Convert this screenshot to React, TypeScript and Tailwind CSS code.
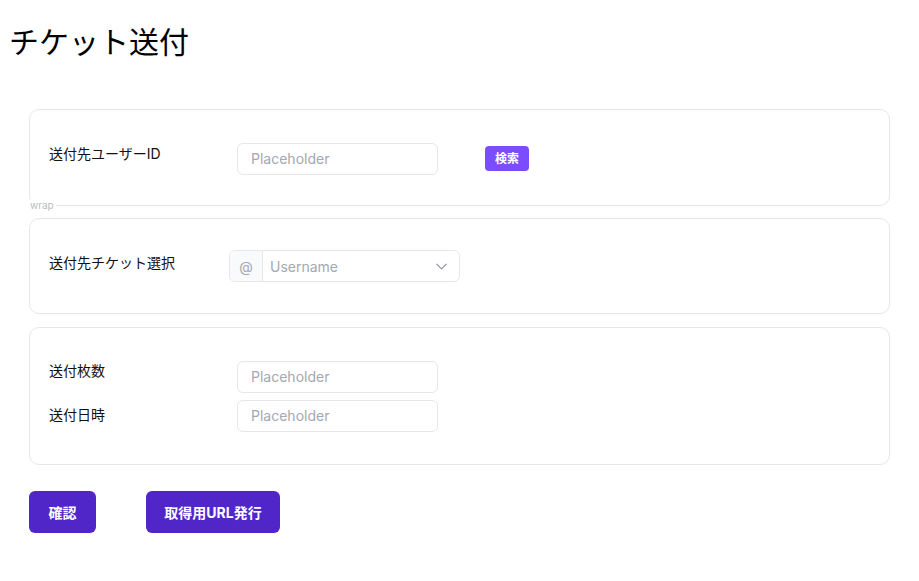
import { ChevronDown } from "lucide-react";

const font = "font-['Inter','Noto_Sans_CJK_JP',sans-serif]";

function TextInput() {
  return (
    <input
      placeholder="Placeholder"
      className="w-[201px] h-[32px] rounded-md border border-[#e5e7eb] bg-white px-[13px] text-[14px] text-gray-800 placeholder:text-[#a3a8b1] outline-none"
    />
  );
}

export default function App() {
  return (
    <div className={`${font} min-h-screen bg-white text-[#111827]`}>
      {/* Title */}
      <h1 className="pl-[9px] pt-[20px] text-[30px] leading-[40px] font-normal text-black font-['Noto_Sans_CJK_JP',sans-serif]">
        チケット送付
      </h1>

      <div className="px-[29px] pt-[49px]">
        {/* User ID */}
        <div className="relative flex h-[97px] items-center rounded-[10px] border border-[#e5e7eb] pl-[19px] pt-[2px]">
          <span className="-mt-[10px] w-[188px] text-[14px] text-[#111]">送付先ユーザーID</span>
          <TextInput />
          <button className="ml-[47px] h-[25px] rounded-[4px] bg-[#7c4dff] px-[10px] text-[12px] font-bold text-white">
            検索
          </button>
          <span className="absolute -bottom-[6px] left-0 bg-white pr-[2px] text-[10px] leading-[12px] text-[#b8bcc4]">
            wrap
          </span>
        </div>

        {/* Ticket select */}
        <div className="mt-[12px] flex h-[96px] items-center rounded-[10px] border border-[#e5e7eb] pl-[19px]">
          <span className="-mt-[8px] w-[180px] text-[14px] text-[#111]">送付先チケット選択</span>
          <div className="flex h-[32px] w-[231px] items-stretch overflow-hidden rounded-md border border-[#e5e7eb]">
            <span className="flex w-[33px] items-center justify-center border-r border-[#e5e7eb] bg-[#f9fafb] text-[14px] text-[#a3a8b1]">
              @
            </span>
            <div className="flex flex-1 items-center justify-between pl-[7px] pr-[8px]">
              <span className="text-[14px] text-[#a3a8b1]">Username</span>
              <ChevronDown className="h-[19px] w-[19px] text-[#8b9099]" strokeWidth={1.4} />
            </div>
          </div>
        </div>

        {/* Count / date */}
        <div className="mt-[13px] flex h-[138px] flex-col justify-center gap-[7px] rounded-[10px] border border-[#e5e7eb] pl-[19px]">
          <div className="flex items-center">
            <span className="-mt-[12px] w-[188px] text-[14px] text-[#111]">送付枚数</span>
            <TextInput />
          </div>
          <div className="flex items-center">
            <span className="-mt-[3px] w-[188px] text-[14px] text-[#111]">送付日時</span>
            <TextInput />
          </div>
        </div>

        {/* Actions */}
        <div className="mt-[26px] flex gap-[50px]">
          <button className="h-[42px] w-[67px] rounded-md bg-[#5126c8] text-[14px] font-bold text-white">
            確認
          </button>
          <button className="h-[42px] w-[134px] rounded-md bg-[#5126c8] text-[14px] font-bold text-white">
            取得用URL発行
          </button>
        </div>
      </div>
    </div>
  );
}
